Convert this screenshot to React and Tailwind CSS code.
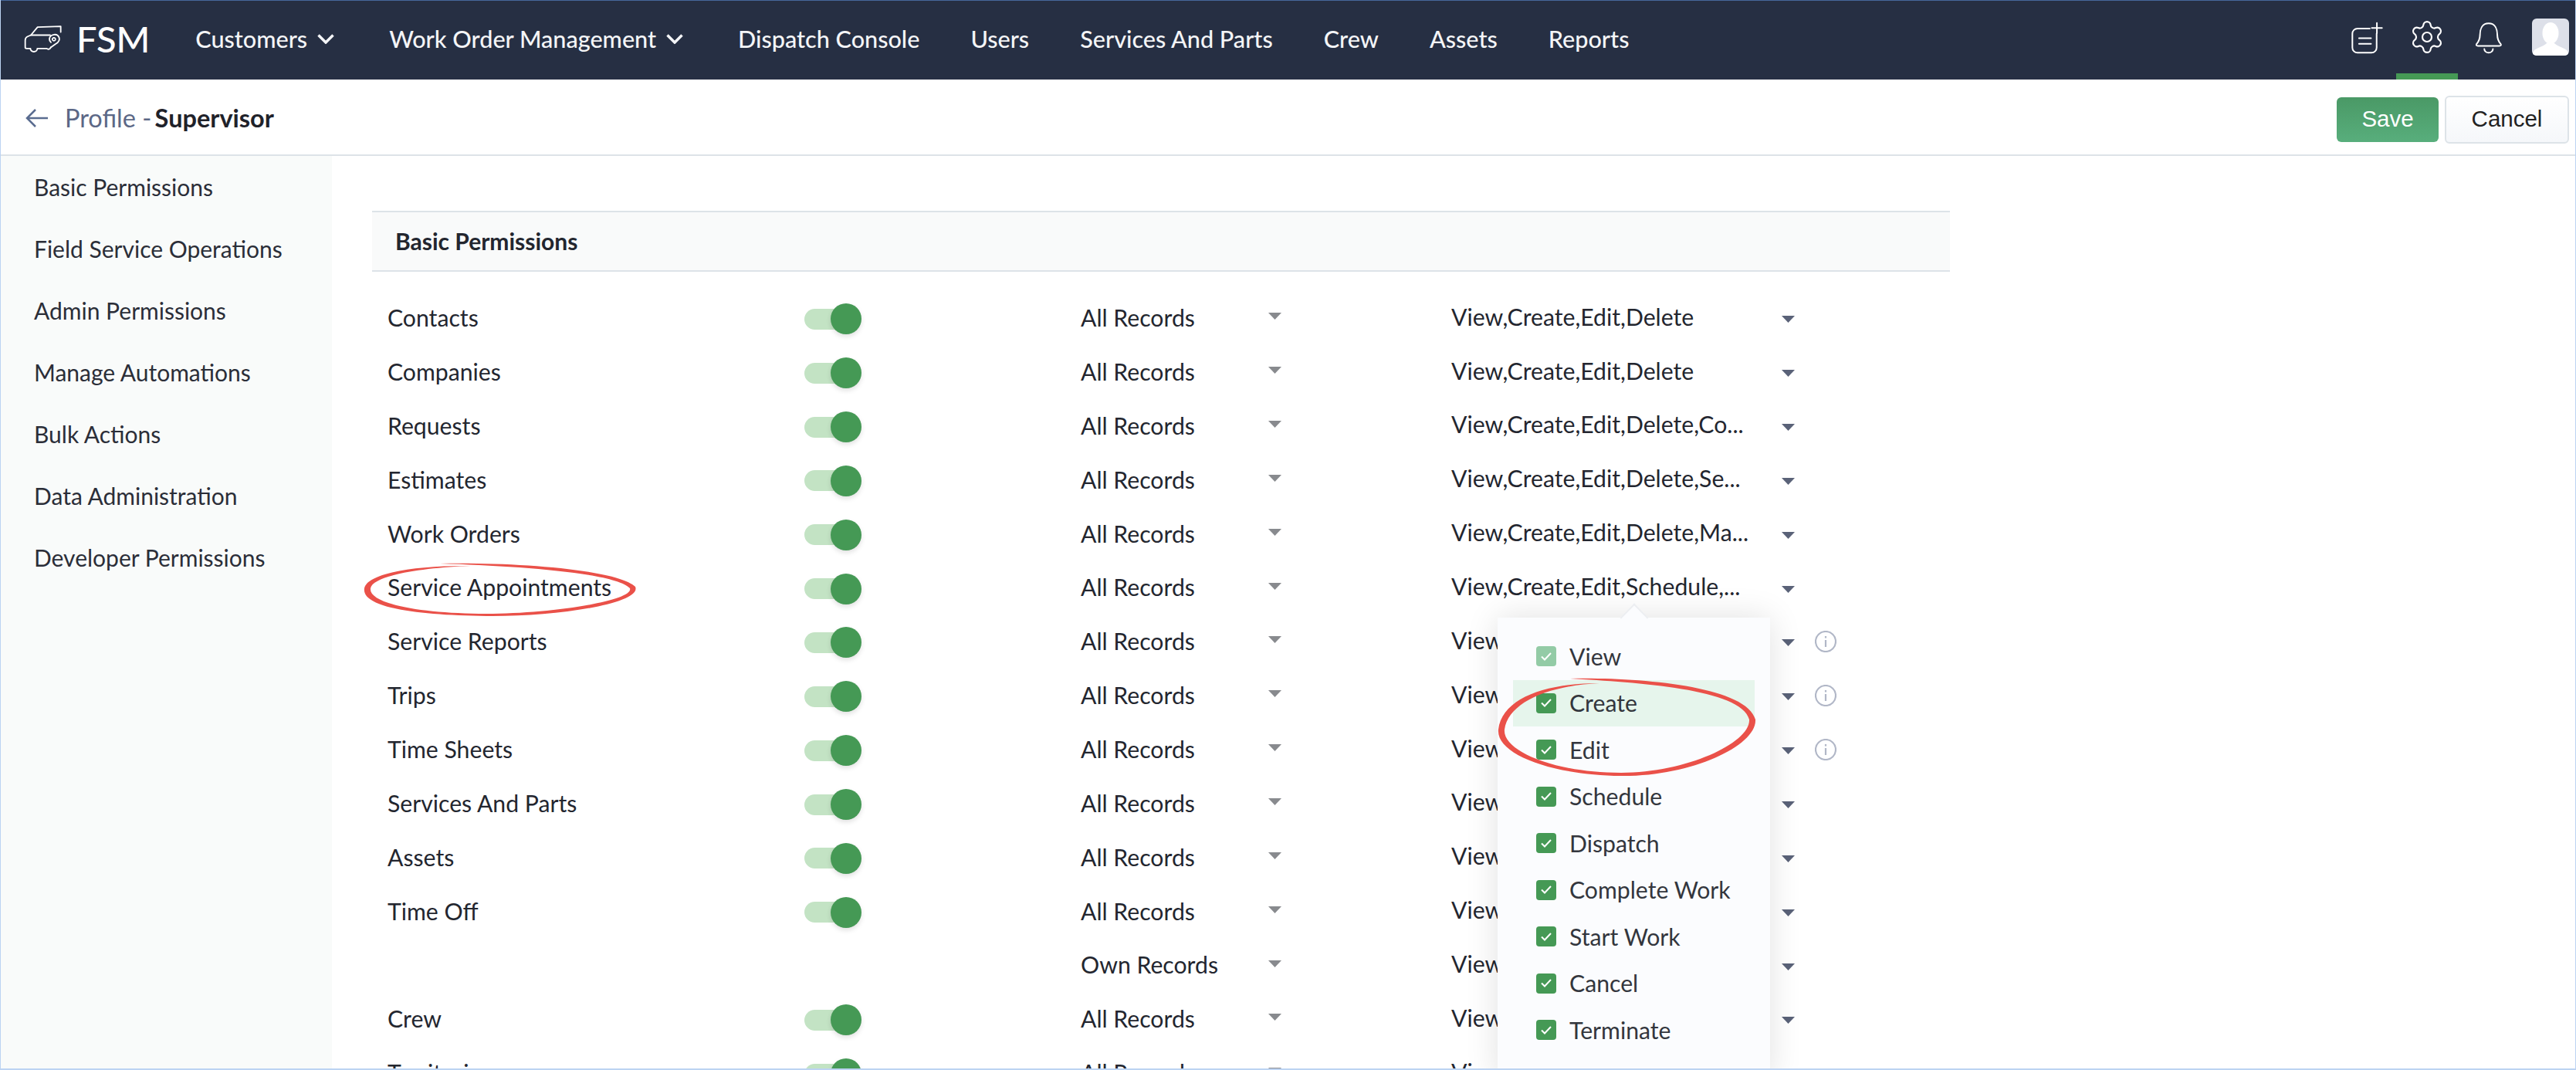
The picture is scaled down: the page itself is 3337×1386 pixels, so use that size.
import { Settings } from 'lucide-react'

const nav = [
  { label: 'Customers', caret: true },
  { label: 'Work Order Management', caret: true },
  { label: 'Dispatch Console' },
  { label: 'Users' },
  { label: 'Services And Parts' },
  { label: 'Crew' },
  { label: 'Assets' },
  { label: 'Reports' },
]

const sideItems = [
  'Basic Permissions',
  'Field Service Operations',
  'Admin Permissions',
  'Manage Automations',
  'Bulk Actions',
  'Data Administration',
  'Developer Permissions',
]

const basic = 'View,Create,Edit,Delete'
const rows = [
  { name: 'Contacts', perms: basic },
  { name: 'Companies', perms: basic },
  { name: 'Requests', perms: 'View,Create,Edit,Delete,Co...' },
  { name: 'Estimates', perms: 'View,Create,Edit,Delete,Se...' },
  { name: 'Work Orders', perms: 'View,Create,Edit,Delete,Ma...' },
  { name: 'Service Appointments', perms: 'View,Create,Edit,Schedule,...' },
  { name: 'Service Reports', perms: basic, info: true },
  { name: 'Trips', perms: basic, info: true },
  { name: 'Time Sheets', perms: basic, info: true },
  { name: 'Services And Parts', perms: basic },
  { name: 'Assets', perms: basic },
  { name: 'Time Off', perms: basic },
  { name: '', perms: basic, records: 'Own Records', noToggle: true },
  { name: 'Crew', perms: basic },
  { name: 'Territories', perms: basic },
]

const popupItems = ['View', 'Create', 'Edit', 'Schedule', 'Dispatch', 'Complete Work', 'Start Work', 'Cancel', 'Terminate']

function TruckLogo() {
  return (
    <svg width="50" height="37" viewBox="30 30 150 110" fill="none" stroke="#fff" strokeWidth="5.5" strokeLinejoin="round" strokeLinecap="round">
      <path d="M176 58V36L86 39L60 70H135" />
      <path d="M60 70L46 76Q38 80 38 90V118Q38 122 44 122H58" />
      <path d="M58 122a13 12 0 0 0 27 0H122a9 9 0 0 0 15-4" />
      <path d="M137 118L157 104Q174 94 170 80Q165 66 150 68Q134 70 132 84Q131 92 138 98" />
      <path d="M150 80a6 6 0 1 1 -1 0" />
    </svg>
  )
}

function NoteAdd() {
  return (
    <svg width="43" height="43" viewBox="435 80 130 130" fill="none" stroke="#fff" strokeWidth="6" strokeLinecap="round">
      <path d="M510 110H462a20 20 0 0 0 -20 20v55a20 20 0 0 0 20 20h55a20 20 0 0 0 20 -20V130" />
      <path d="M468 148H515M468 170H515" />
      <path d="M538 88V128M518 108H558" />
    </svg>
  )
}

function Bell() {
  return (
    <svg width="38" height="43" viewBox="915 80 115 130" fill="none" stroke="#fff" strokeWidth="6" strokeLinecap="round" strokeLinejoin="round">
      <path d="M972 90C945 90 938 115 938 135C938 155 930 165 924 172Q922 178 930 178H1014Q1022 178 1020 172C1014 165 1006 155 1006 135C1006 115 999 90 972 90Z" />
      <path d="M955 190a17 15 0 0 0 34 0" />
    </svg>
  )
}

function Avatar() {
  return (
    <div className="h-[48px] w-[48px] overflow-hidden rounded-md bg-[#dde0e9]">
      <svg width="48" height="48" viewBox="0 0 48 48" fill="#fff">
        <ellipse cx="24" cy="19" rx="10.5" ry="14" />
        <path d="M1 48V44C3 38 14 37 19 32H29C34 37 45 38 47 44V48Z" />
      </svg>
    </div>
  )
}

function Chevron() {
  return (
    <svg width="22" height="13" viewBox="0 0 22 13" fill="none" stroke="#f4f5f7" strokeWidth="3.5">
      <path d="M1.5 1.5L11 11L20.5 1.5" />
    </svg>
  )
}

function Arrow({ color }) {
  return (
    <svg width="17" height="9" viewBox="0 0 17 9" fill={color}>
      <path d="M0 0H17L8.5 9Z" />
    </svg>
  )
}

function InfoIcon() {
  return (
    <svg width="28" height="28" viewBox="0 0 28 28" fill="none" stroke="#b1b7c7" strokeWidth="2.2">
      <circle cx="14" cy="14" r="13" />
      <path d="M14 12V21M14 7V9.5" />
    </svg>
  )
}

function Toggle() {
  return (
    <div className="mt-[3px] flex items-center">
      <div className="h-[27px] w-[50px] rounded-l-full bg-[#c3e3c4]" />
      <div className="-ml-[16px] h-[40px] w-[40px] rounded-full bg-[#459955] shadow-[0_3px_6px_rgba(0,0,0,0.12)]" />
    </div>
  )
}

function Row({ row }) {
  return (
    <div className="grid h-[69.85px] grid-cols-[540px_358px_480px_1fr] items-center pl-[20px] text-[30.2px] text-[#23262f]">
      <div>{row.name}</div>
      <div>{row.noToggle ? null : <Toggle />}</div>
      <div className="flex items-center">
        <span className="w-[243px]">{row.records || 'All Records'}</span>
        <span className="mb-[4px] flex">
          <Arrow color="#888a8e" />
        </span>
      </div>
      <div className="flex items-center">
        <span className="mb-[3px] w-[428px] whitespace-nowrap">{row.perms}</span>
        <span className="mt-[4px] flex">
          <Arrow color="#5a6278" />
        </span>
        {row.info && (
          <span className="ml-[26px] flex">
            <InfoIcon />
          </span>
        )}
      </div>
    </div>
  )
}

function PermPopup() {
  return (
    <div className="absolute left-[1939px] top-[800px] h-[600px] w-[353px] bg-[#fbfcfe] pt-[20px] shadow-[0_0_40px_rgba(0,0,0,0.12)]">
      <div className="absolute left-[164px] top-[-13px] h-[26px] w-[26px] rotate-45 border-l-2 border-t-2 border-[#eceef1] bg-[#fbfcfe]" />
      {popupItems.map((item, i) => (
        <div key={item} className={`relative mx-[20px] flex h-[60.5px] items-center gap-[17px] pl-[30px] text-[30.2px] text-[#33363d] ${i === 1 ? 'bg-[#e6f5ec]' : ''}`}>
          <span className={`flex h-[26px] w-[26px] items-center justify-center rounded-[4px] ${i === 0 ? 'bg-[#93cba6]' : 'bg-[#459955]'}`}>
            <svg width="16" height="13" viewBox="0 0 16 13" fill="none" stroke="#fff" strokeWidth="2">
              <path d="M2 6.5L6 10.5L14 2" />
            </svg>
          </span>
          {item}
        </div>
      ))}
    </div>
  )
}

export default function App() {
  return (
    <div className="relative flex h-screen flex-col overflow-hidden border-x border-b-2 border-[#bcd3f2] bg-white font-['Lato',sans-serif]">
      <header className="flex h-[103px] shrink-0 items-stretch justify-between border-t border-t-[#46689c] bg-[#262f43] pr-[8px] text-white">
        <div className="flex items-center pb-[3px]">
          <div className="ml-[29px] flex">
            <TruckLogo />
          </div>
          <span className="ml-[19px] text-[47px] font-medium leading-none">FSM</span>
          <nav className="ml-[59px] flex items-center gap-[66px] text-[30.6px] font-medium text-[#f4f5f7]">
            {nav.map((n) => (
              <div key={n.label} className={`flex items-center gap-[13px] ${n.caret ? 'mr-[5px]' : ''}`}>
                {n.label}
                {n.caret && <Chevron />}
              </div>
            ))}
          </nav>
        </div>
        <div className="flex items-stretch">
          <div className="flex items-center pb-[8px]">
            <NoteAdd />
          </div>
          <div className="ml-[16px] flex w-[80px] items-center justify-center border-b-[8px] border-[#459955]">
            <Settings size={48} strokeWidth={1.1} color="#fff" />
          </div>
          <div className="ml-[21px] flex items-center pb-[8px]">
            <Bell />
          </div>
          <div className="ml-[37px] flex items-center pb-[8px]">
            <Avatar />
          </div>
        </div>
      </header>

      <div className="flex h-[99px] shrink-0 items-center justify-between border-b-2 border-[#dde3e8] pl-[32px] pr-[8px]">
        <div className="flex items-center gap-[21px] pt-[3px] text-[32.5px]">
          <svg width="30" height="24" viewBox="0 0 30 24" fill="none" stroke="#5a6c90" strokeWidth="2.5">
            <path d="M29 12H2M13 1L2 12L13 23" />
          </svg>
          <span className="text-[#5c6886]">
            Profile - <b className="ml-[-4px] font-bold text-[#1f222a]">Supervisor</b>
          </span>
        </div>
        <div className="flex items-center gap-[8px] pt-[6px] font-['Liberation_Sans',sans-serif] text-[29.5px]">
          <button className="h-[58px] w-[132px] rounded-md bg-gradient-to-b from-[#4a9966] to-[#58ae7c] text-white">Save</button>
          <button className="h-[62px] w-[161px] rounded-md border-2 border-[#dde3e8] bg-gradient-to-b from-white to-[#f5f7fa] text-[#222]">Cancel</button>
        </div>
      </div>

      <div className="flex min-h-0 flex-1">
        <aside className="w-[429px] shrink-0 bg-[#f9fbfa] pl-[43px] text-[30px] text-[#2b2e38]">
          {sideItems.map((s) => (
            <div key={s} className="flex h-[80px] items-center">
              {s}
            </div>
          ))}
        </aside>
        <main className="pl-[52px] pt-[71px]">
          <div className="flex h-[79px] w-[2044px] items-center border-y-2 border-[#dde3e8] bg-[#f9fafa] pl-[30px] text-[30px] font-bold text-[#23262f]">
            Basic Permissions
          </div>
          <div className="mt-[25px]">
            {rows.map((r) => (
              <Row key={r.name + r.records} row={r} />
            ))}
          </div>
        </main>
      </div>

      <PermPopup />

      {/* hand drawn red circles */}
      <svg className="pointer-events-none absolute left-[-1px] top-0" width="3337" height="1386" viewBox="0 0 3337 1386" fill="#ea5149">
        <path d="M570 730C670 728 800 738 823 760C832 782 720 799 630 798C540 797 468 787 472 762C476 742 540 732 610 733C550 735 483 745 480 762C477 782 545 795 630 795C715 795 822 778 816 762C798 742 670 733 570 730Z" />
        <path d="M2034 879C2120 877 2262 888 2274 932C2276 966 2190 1006 2100 1005C2010 1004 1938 977 1941 945C1946 905 2000 885 2072 885C2005 888 1954 910 1949 945C1946 972 2012 1001 2100 1001C2185 1001 2268 962 2266 932C2256 892 2120 884 2034 879Z" />
      </svg>
    </div>
  )
}
